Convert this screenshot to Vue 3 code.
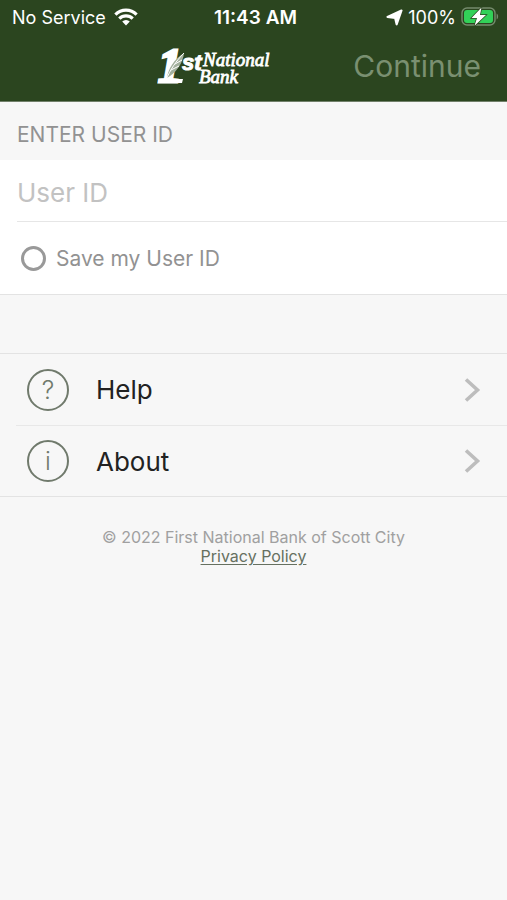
<script setup>
import { ref } from 'vue'

const userId = ref('')
const saveId = ref(false)
const links = [
  { label: 'Help', glyph: '?' },
  { label: 'About', glyph: 'i' },
]
</script>

<template>
  <div class="screen">
    <header class="top">
      <div class="status">
        <div class="status-left">
          <span>No Service</span>
          <svg width="24" height="18" viewBox="0 0 24 18" aria-hidden="true">
            <g fill="none" stroke="#fff" stroke-width="3.2">
              <path d="M1.4 6.6a15 15 0 0 1 21.2 0" />
              <path d="M5.3 10.6a9.5 9.5 0 0 1 13.4 0" />
            </g>
            <path d="M12 17.4l-3.8-3.8a5.4 5.4 0 0 1 7.6 0z" fill="#fff" />
          </svg>
        </div>
        <strong class="time">11:43 AM</strong>
        <div class="status-right">
          <svg width="17" height="17" viewBox="0 0 16 16" aria-hidden="true">
            <path d="M14.6 1.4L10 14.4 8.600 8.400 1.4 7.400z" fill="#fff" stroke="#fff" stroke-width="2" stroke-linejoin="round" />
          </svg>
          <span>100%</span>
          <svg width="38" height="20" viewBox="0 0 38 20" aria-hidden="true">
            <rect x="1" y="1" width="33" height="17" rx="5" fill="none" stroke="#758b6d" stroke-width="1.4" />
            <path d="M35.6 6.5v6c2-.7 2-5.3 0-6z" fill="#758b6d" />
            <rect x="3" y="3" width="29" height="13" rx="3" fill="#32d158" />
            <path d="M20.500 .5L10.500 11h5.500L13.500 18.800 25 8h-6z" fill="#fff" stroke="#2b451f" stroke-width="1.400" paint-order="stroke" />
          </svg>
        </div>
      </div>
      <div class="nav">
        <svg class="logo" width="116" height="62" viewBox="0 -2 116 62" role="img" aria-label="1st National Bank">
          <g class="logo-text" fill="#fff" stroke="#fff">
            <text x="1" y="45" font-size="48" font-weight="700" stroke-width="3">1</text>
            <text class="ordinal" x="25" y="33" font-size="22" stroke-width="1">st</text>
            <text x="46" y="29" font-size="19" stroke-width=".8">National</text>
            <text x="42" y="46" font-size="19" stroke-width=".8">Bank</text>
          </g>
          <path d="M2 42h24l-1 4H1z" fill="#fff" />
          <path d="M10 41C11 32 17 22 27 16C26 25 21 33 13 39z" fill="#a3b09d" />
          <path d="M9 43C13 33 19 24 27 16M14 33l8-4M18 27l7-4" fill="none" stroke="#fff" stroke-width="1" />
        </svg>
        <button class="continue" type="submit" form="login" disabled>Continue</button>
      </div>
    </header>

    <main>
      <form id="login" @submit.prevent>
        <label class="section" for="user-id">ENTER USER ID</label>
        <div class="fields">
          <input id="user-id" v-model="userId" class="user" type="text" placeholder="User ID" autocomplete="username" />
          <label class="save">
            <input v-model="saveId" class="check" type="checkbox" />
            <span>Save my User ID</span>
          </label>
        </div>
      </form>

      <nav class="links">
        <a v-for="link in links" :key="link.label" class="link" href="#">
          <span class="badge" aria-hidden="true">{{ link.glyph }}</span>
          <span class="link-label">{{ link.label }}</span>
          <svg width="18" height="26" viewBox="0 0 18 26" aria-hidden="true">
            <path d="M3 2.5L14.500 13 3 23.500" fill="none" stroke="#bdbdbd" stroke-width="3.600" />
          </svg>
        </a>
      </nav>
    </main>

    <footer class="footer">
      <div>© 2022 First National Bank of Scott City</div>
      <a class="privacy" href="#">Privacy Policy</a>
    </footer>
  </div>
</template>

<style>
body {
  background: #f7f7f7;
}
</style>

<style scoped>
.screen {
  min-height: 100vh;
  background: #f7f7f7;
  font-family: Inter, "Liberation Sans", sans-serif;
  color: #222;
}
.screen * {
  box-sizing: border-box;
}
.top {
  background: #2b451f;
  color: #fff;
  border-bottom: 1px solid #71806a;
}
.status {
  display: grid;
  grid-template-columns: 1fr auto 1fr;
  align-items: center;
  height: 34px;
  padding: 0 8px 0 12px;
  font-size: 18px;
}
.status-left,
.status-right {
  display: flex;
  align-items: center;
  gap: 8px;
}
.status-right {
  justify-content: flex-end;
  gap: 5px;
}
.time {
  font-size: 19px;
  font-weight: 600;
}
.nav {
  display: flex;
  align-items: center;
  justify-content: space-between;
  height: 67px;
  padding: 0 26px 4px 31%;
}
.logo {
  flex: none;
}
.logo-text {
  font-family: "Liberation Serif", serif;
  font-style: italic;
}
.ordinal {
  font-family: "Liberation Sans", sans-serif;
  font-weight: 700;
}
.continue {
  padding: 0;
  border: 0;
  background: none;
  color: #7a9071;
  font: 400 30px/36px Inter, sans-serif;
}
.section {
  display: block;
  height: 58px;
  padding: 19px 17px 0;
  color: #929292;
  font-size: 21px;
  line-height: 28px;
}
.fields {
  background: #fff;
  border-bottom: 1px solid #e3e3e3;
  padding-left: 17px;
}
.user {
  display: block;
  width: 100%;
  height: 62px;
  padding: 4px 0 0;
  border: 0;
  border-bottom: 1px solid #e6e6e6;
  border-radius: 0;
  outline: 0;
  background: none;
  color: #222;
  font: 400 26px/32px Inter, sans-serif;
}
.user::placeholder {
  color: #c2c2c2;
  opacity: 1;
}
.save {
  display: flex;
  align-items: center;
  gap: 10px;
  height: 72px;
  padding-left: 4px;
  color: #929292;
  font-size: 21px;
}
.check {
  appearance: none;
  width: 25px;
  height: 25px;
  margin: 0;
  border: 3px solid #999;
  border-radius: 50%;
}
.check:checked {
  background: #999;
}
.links {
  margin-top: 58px;
  border-top: 1px solid #e3e3e3;
  border-bottom: 1px solid #e3e3e3;
  padding-left: 16px;
}
.link {
  display: flex;
  align-items: center;
  height: 71px;
  padding: 0 26px 0 11px;
  color: #222;
  font-size: 26px;
  text-decoration: none;
}
.link + .link {
  border-top: 1px solid #e8e8e8;
}
.badge {
  display: flex;
  align-items: center;
  justify-content: center;
  width: 42px;
  height: 42px;
  border: 2px solid #707a6c;
  border-radius: 50%;
  color: #707a6c;
  font-size: 25px;
  font-weight: 300;
}
.link-label {
  flex: 1;
  margin-left: 27px;
}
.footer {
  padding: 31px 16px;
  color: #a0a0a0;
  font-size: 16px;
  line-height: 19px;
  text-align: center;
}
.privacy {
  color: #667060;
  text-underline-offset: 2px;
}
</style>
